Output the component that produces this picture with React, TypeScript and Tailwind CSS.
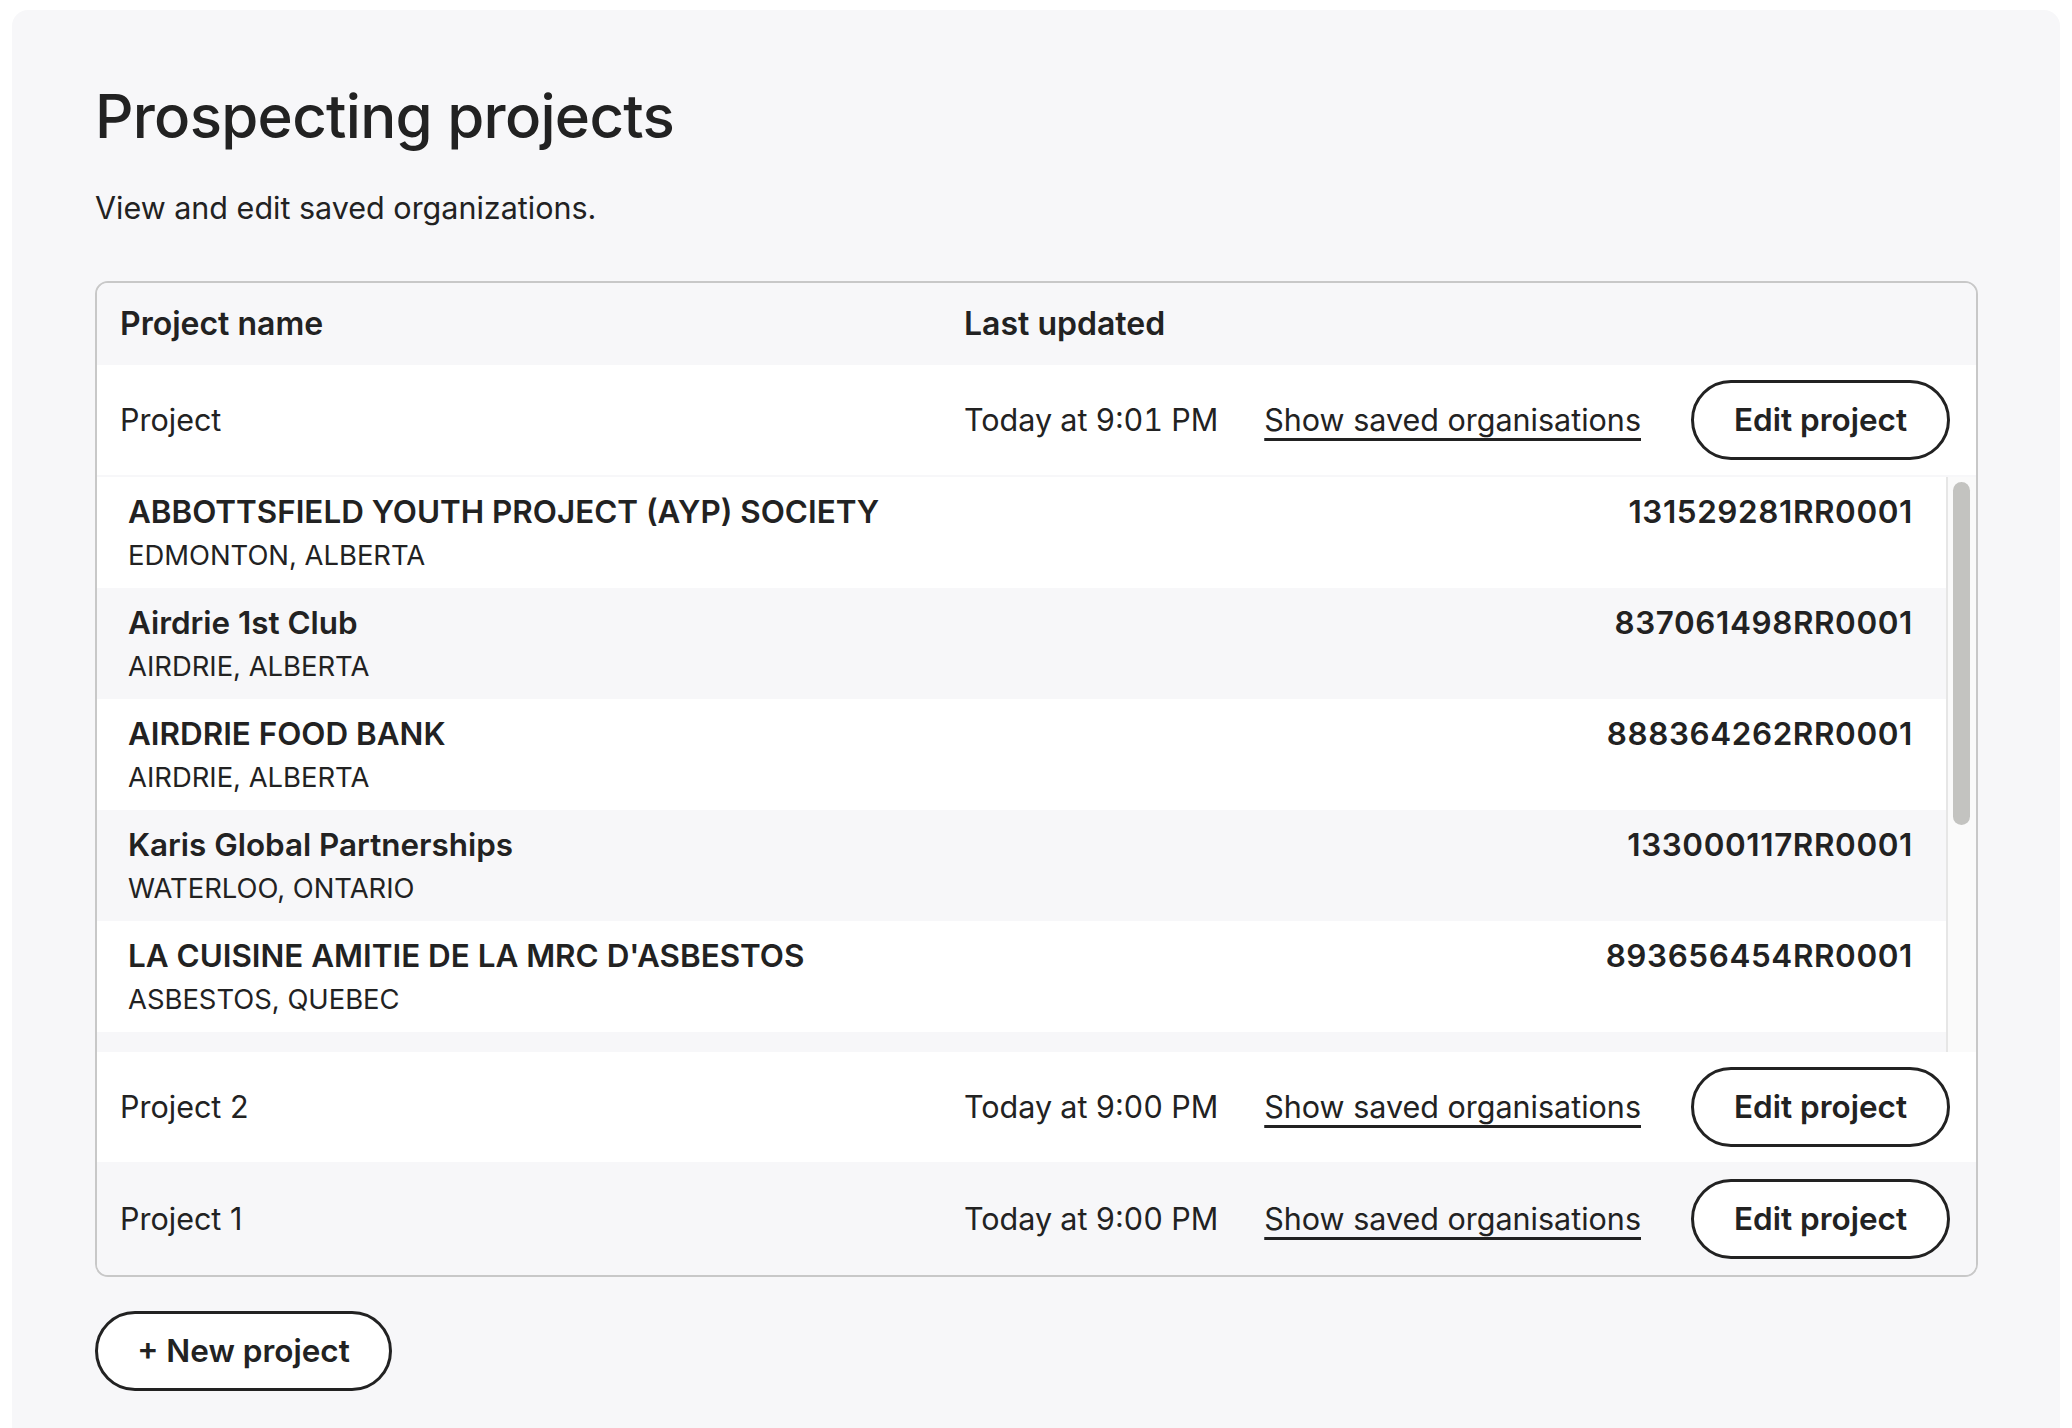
const orgs = [
  { name: "ABBOTTSFIELD YOUTH PROJECT (AYP) SOCIETY", place: "EDMONTON, ALBERTA", bn: "131529281RR0001" },
  { name: "Airdrie 1st Club", place: "AIRDRIE, ALBERTA", bn: "837061498RR0001" },
  { name: "AIRDRIE FOOD BANK", place: "AIRDRIE, ALBERTA", bn: "888364262RR0001" },
  { name: "Karis Global Partnerships", place: "WATERLOO, ONTARIO", bn: "133000117RR0001" },
  { name: "LA CUISINE AMITIE DE LA MRC D'ASBESTOS", place: "ASBESTOS, QUEBEC", bn: "893656454RR0001" },
];

const projects = [
  { name: "Project", updated: "Today at 9:01 PM", open: true },
  { name: "Project 2", updated: "Today at 9:00 PM", open: false },
  { name: "Project 1", updated: "Today at 9:00 PM", open: false },
];

function ProjectRow({ name, updated, last }: { name: string; updated: string; last: boolean }) {
  return (
    <div
      className={`flex items-center pl-[23px] pr-[26px] text-[30.5px] ${
        last ? "h-[113px] bg-[#f7f7f9]" : "h-[110px] bg-white"
      }`}
    >
      <div className="w-[844px]">{name}</div>
      <div className="flex-1 tabular-nums">{updated}</div>
      <a href="#" className="underline decoration-[3px] underline-offset-[7px]">
        Show saved organisations
      </a>
      <button className="ml-[50px] h-[80px] w-[259px] rounded-full border-[3px] border-[#222] bg-white text-[31.5px] font-semibold">
        Edit project
      </button>
    </div>
  );
}

function SavedOrgs() {
  return (
    <div className="bg-[#f7f7f9] pt-[2px]">
      <div className="flex h-[575px]">
        <ul className="flex-1 overflow-hidden">
          {orgs.map((o, i) => (
            <li
              key={o.bn}
              className={`flex h-[111px] justify-between pl-[31px] pr-[33px] pt-[16px] ${i % 2 === 0 ? "bg-white" : "bg-[#f7f7f9]"}`}
            >
              <div>
                <div className="text-[31.4px] font-semibold leading-[38px]">{o.name}</div>
                <div className="mt-[8px] text-[27.4px] leading-[33px]">{o.place}</div>
              </div>
              <div className="text-[31.4px] font-semibold leading-[38px] tracking-[0.02em]">{o.bn}</div>
            </li>
          ))}
        </ul>
        <div className="w-[30px] border-l-2 border-[#e6e6e6] bg-[#fafafa]">
          <div className="ml-[5px] mt-[5px] h-[343px] w-[17px] rounded-full bg-[#c3c3c0]" />
        </div>
      </div>
    </div>
  );
}

export default function App() {
  return (
    <div className="h-screen overflow-hidden bg-white px-[12px] pt-[10px] font-['Inter',sans-serif] text-[#222]">
      <main className="min-h-[1500px] rounded-[16px] bg-[#f7f7f9] pl-[83px] pr-[82px] pt-[70px]">
        <h1 className="text-[60px] font-medium leading-[72px] tracking-[-0.012em]">Prospecting projects</h1>
        <p className="mt-[37px] text-[30.5px] leading-[38px]">View and edit saved organizations.</p>

        <div className="mt-[54px] overflow-hidden rounded-[13px] border-2 border-[#c8c8c8]">
          <div className="flex h-[82px] items-center bg-[#f7f7f9] pl-[23px] text-[32px] font-semibold">
            <div className="w-[844px]">Project name</div>
            <div>Last updated</div>
          </div>
          {projects.map((p, i) => (
            <div key={p.name}>
              <ProjectRow name={p.name} updated={p.updated} last={i === projects.length - 1} />
              {p.open && <SavedOrgs />}
            </div>
          ))}
        </div>

        <button className="mt-[34px] h-[80px] w-[297px] rounded-full border-[3px] border-[#222] bg-white text-[31.5px] font-semibold">
          + New project
        </button>
      </main>
    </div>
  );
}
